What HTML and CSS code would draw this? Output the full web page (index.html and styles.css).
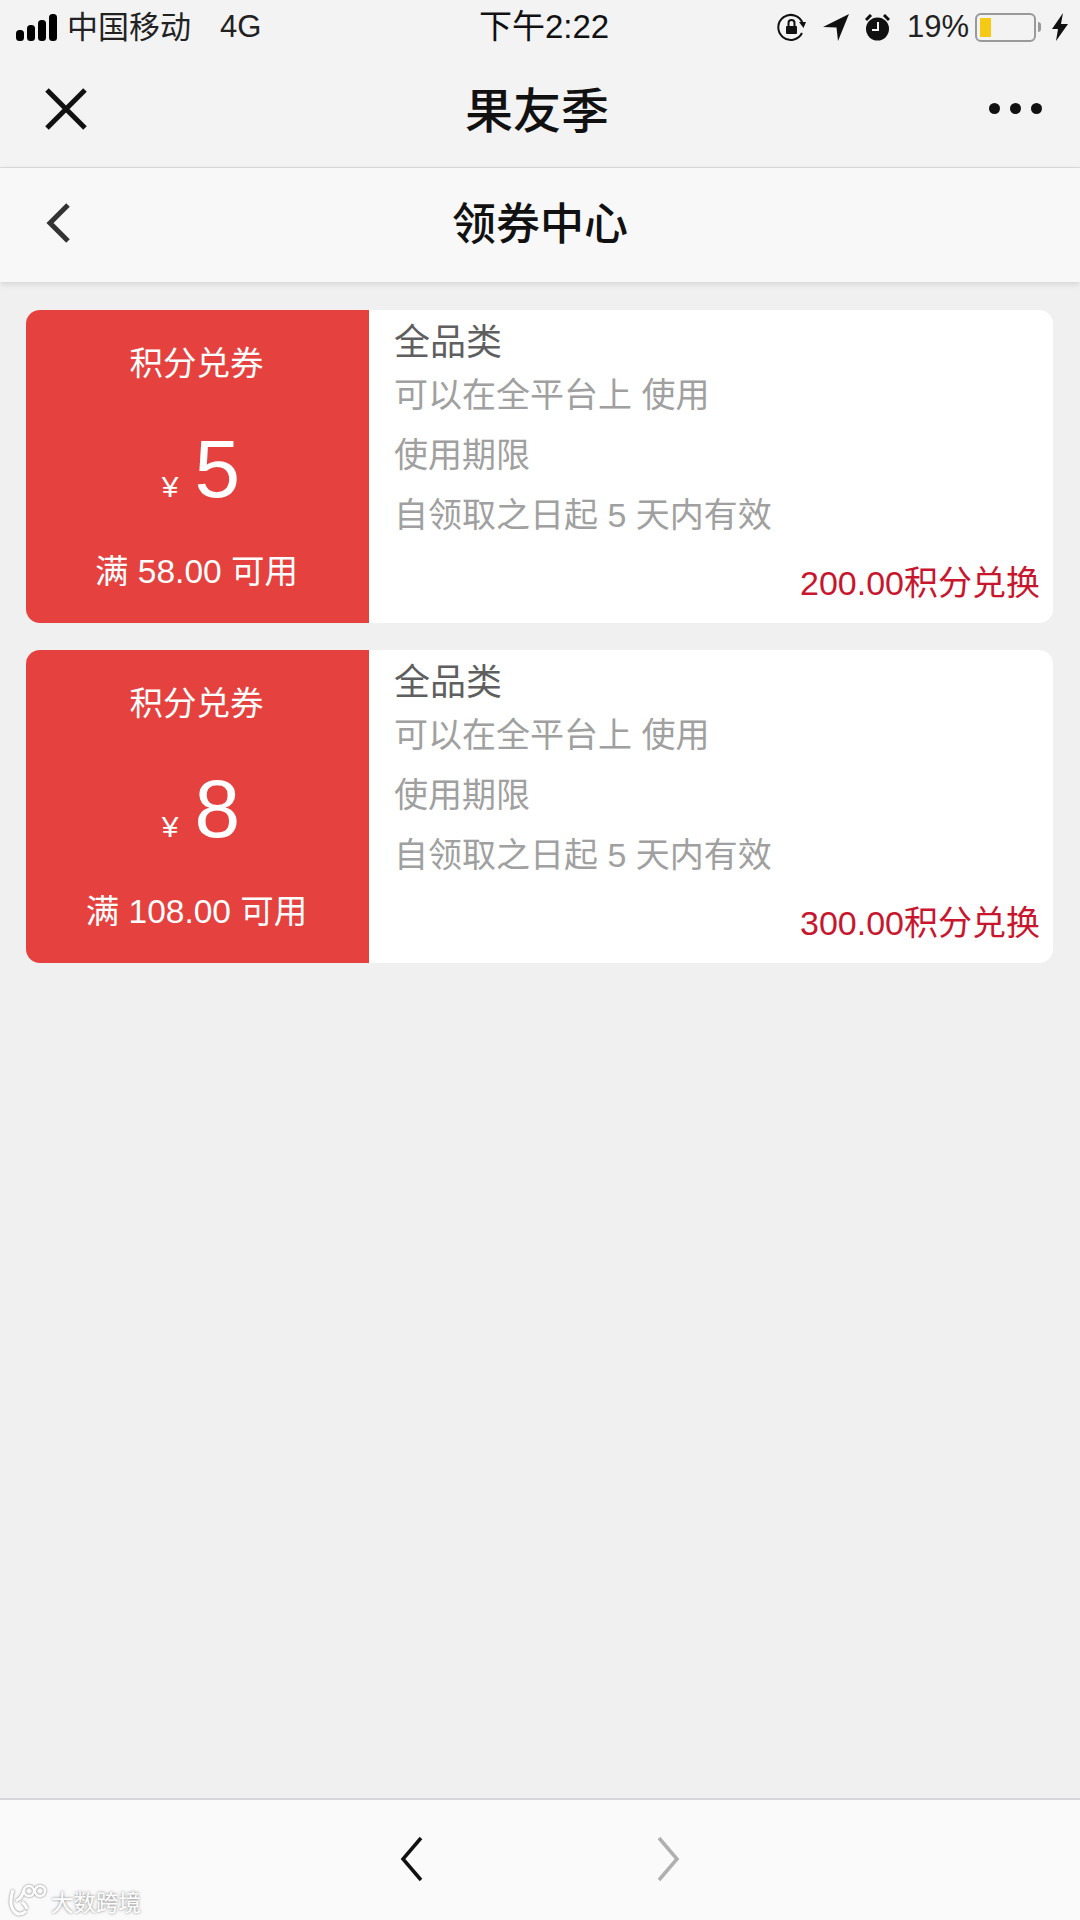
FILE: index.html
```html
<!DOCTYPE html>
<html lang="zh-CN">
<head>
    <meta charset="UTF-8">
    <meta name="viewport" content="width=device-width, initial-scale=1.0">
    <title>领券中心</title>
    <link rel="stylesheet" href="styles.css">
</head>
<body>
    <div class="page">
        <header class="top">
            <div class="status">
                <div class="status-left">
                    <svg class="signal" width="42" height="27" viewBox="0 0 42 27">
                        <rect x="0" y="16" width="8" height="11" rx="3.5"/>
                        <rect x="11" y="11" width="8" height="16" rx="3.5"/>
                        <rect x="22" y="6" width="8" height="21" rx="3.5"/>
                        <rect x="33" y="0" width="8" height="27" rx="3.5"/>
                    </svg>
                    <span class="carrier">中国移动</span>
                    <span class="network">4G</span>
                </div>
                <div class="status-time">下午2:22</div>
                <div class="status-right">
                    <svg class="rotation" width="30" height="28" viewBox="0 0 30 28">
                        <path d="M25 20a12.5 12.5 0 1 1 .5-10" fill="none" stroke="#111" stroke-width="2"/>
                        <path d="M22 9l7 0-2.5 6z" fill="#111"/>
                        <rect x="9" y="13" width="11" height="8" rx="1" fill="#111"/>
                        <path d="M11.5 13v-3a3 3 0 0 1 6 0v3" fill="none" stroke="#111" stroke-width="2"/>
                    </svg>
                    <svg class="location" width="26" height="27" viewBox="0 0 26 27">
                        <path d="M26 0L15 27 13.500 13.500 0 13z" fill="#111"/>
                    </svg>
                    <svg class="alarm" width="25" height="27" viewBox="0 0 25 27">
                        <circle cx="12.500" cy="15" r="11.500" fill="#111"/>
                        <path d="M13 8v8H7" fill="none" stroke="#f3f3f3" stroke-width="2"/>
                        <path d="M1 6l5-5M24 6l-5-5" stroke="#111" stroke-width="3" fill="none"/>
                    </svg>
                    <span class="percent">19%</span>
                    <div class="battery">
                        <div class="battery-level"></div>
                    </div>
                    <div class="battery-nub"></div>
                    <svg class="bolt" width="16" height="28" viewBox="0 0 16 28">
                        <path d="M11 0L0 16h6L4 28 16 11H9z" fill="#111"/>
                    </svg>
                </div>
            </div>
            <div class="wx-nav">
                <svg class="wx-close" width="42" height="42" viewBox="0 0 42 42">
                    <path d="M2 2l38 38M40 2L2 40" stroke="#111" stroke-width="5" fill="none"/>
                </svg>
                <div class="wx-title">果友季</div>
                <div class="wx-more"><i></i><i></i><i></i></div>
            </div>
        </header>

        <nav class="sub-nav">
            <svg class="sub-back" width="26" height="42" viewBox="0 0 26 42">
                <path d="M23 3L5 21l18 18" stroke="#333" stroke-width="5" fill="none"/>
            </svg>
            <div class="sub-title">领券中心</div>
        </nav>

        <main class="coupons">
            <div class="coupon">
                <div class="coupon-left">
                    <div class="coupon-tag">积分兑券</div>
                    <div class="coupon-amount"><span class="yen">¥</span><span class="num">5</span></div>
                    <div class="coupon-limit">满 58.00 可用</div>
                </div>
                <div class="coupon-right">
                    <div class="coupon-name">全品类</div>
                    <div class="coupon-line">可以在全平台上 使用</div>
                    <div class="coupon-line">使用期限</div>
                    <div class="coupon-line">自领取之日起 5 天内有效</div>
                    <div class="coupon-price">200.00积分兑换</div>
                </div>
            </div>
            <div class="coupon">
                <div class="coupon-left">
                    <div class="coupon-tag">积分兑券</div>
                    <div class="coupon-amount"><span class="yen">¥</span><span class="num">8</span></div>
                    <div class="coupon-limit">满 108.00 可用</div>
                </div>
                <div class="coupon-right">
                    <div class="coupon-name">全品类</div>
                    <div class="coupon-line">可以在全平台上 使用</div>
                    <div class="coupon-line">使用期限</div>
                    <div class="coupon-line">自领取之日起 5 天内有效</div>
                    <div class="coupon-price">300.00积分兑换</div>
                </div>
            </div>
        </main>

        <footer class="bottom">
            <svg width="26" height="46" viewBox="0 0 26 46">
                <path d="M23 2L5 23l18 21" stroke="#111" stroke-width="3.500" fill="none"/>
            </svg>
            <svg width="26" height="46" viewBox="0 0 26 46">
                <path d="M3 2l18 21L3 44" stroke="#b0b0b0" stroke-width="3.500" fill="none"/>
            </svg>
        </footer>

        <div class="watermark">
            <svg width="40" height="34" viewBox="0 0 40 34">
                <path d="M5 6c-3 9-3 16 1 21 3 4 8 4 12 0M8 17c4-2 7-6 8-11M14 18c3 2 4 4 5 7" fill="none" stroke="#fff" stroke-width="3"/>
                <circle cx="21" cy="7" r="5" fill="none" stroke="#fff" stroke-width="2.500"/>
                <circle cx="32" cy="7" r="5" fill="none" stroke="#fff" stroke-width="2.500"/>
            </svg>
            <span>大数跨境</span>
        </div>
    </div>
</body>
</html>
```

FILE: styles.css
```css
* {
    box-sizing: border-box;
}
body {
    margin: 0;
    font-family: "Liberation Sans", "Noto Sans CJK SC", sans-serif;
    background-color: #f1f0f0;
}
.page {
    position: relative;
    display: flex;
    flex-direction: column;
    width: 1080px;
    height: 1920px;
    overflow: hidden;
}

/* status bar + wechat bar */
.top {
    height: 168px;
    background-color: #f3f3f3;
    border-bottom: 1px solid #dcdcdc;
}
.status {
    position: relative;
    display: flex;
    justify-content: space-between;
    align-items: center;
    height: 54px;
    padding: 0 12px 0 16px;
    font-size: 31px;
    color: #222;
}
.status-left {
    display: flex;
    align-items: center;
}
.carrier {
    margin-left: 9px;
    padding-bottom: 5px;
}
.network {
    margin-left: 29px;
}
.status-time {
    position: absolute;
    left: 479px;
    padding-bottom: 6px;
    font-size: 33px;
    color: #111;
}
.status-right {
    display: flex;
    align-items: center;
}
.rotation {
    margin-right: 16px;
}
.location {
    margin-right: 16px;
}
.alarm {
    margin-right: 17px;
}
.percent {
    margin-right: 6px;
}
.battery {
    width: 61px;
    height: 29px;
    padding: 3px;
    border: 2px solid #999;
    border-radius: 6px;
}
.battery-level {
    width: 11px;
    height: 100%;
    background-color: #f6c915;
}
.battery-nub {
    width: 3px;
    height: 10px;
    margin: 0 11px 0 2px;
    background-color: #999;
    border-radius: 0 3px 3px 0;
}
.wx-nav {
    position: relative;
    display: flex;
    justify-content: space-between;
    align-items: center;
    height: 113px;
    padding: 0 38px 4px 45px;
}
.wx-title {
    position: absolute;
    left: 0;
    right: 6px;
    padding-bottom: 4px;
    text-align: center;
    font-size: 48px;
    font-weight: 500;
    color: #111;
}
.wx-more {
    display: flex;
    gap: 10px;
}
.wx-more i {
    display: block;
    width: 11px;
    height: 11px;
    background-color: #111;
    border-radius: 50%;
}

.sub-nav {
    position: relative;
    display: flex;
    align-items: center;
    height: 114px;
    padding: 0 0 4px 45px;
    background-color: #f8f8f8;
    box-shadow: 0 2px 6px rgba(0, 0, 0, 0.12);
}
.sub-title {
    position: absolute;
    left: 0;
    right: 0;
    padding-bottom: 4px;
    text-align: center;
    font-size: 44px;
    font-weight: 500;
    color: #111;
}

/* coupons */
.coupons {
    display: flex;
    flex-direction: column;
    gap: 27px;
    padding: 28px 27px 0 26px;
}
.coupon {
    display: flex;
    height: 313px;
    background-color: #fff;
    border-radius: 14px;
    overflow: hidden;
}
.coupon-left {
    width: 343px;
    padding: 34px 2px 0 0;
    background-color: #e5413e;
    color: #fff;
    text-align: center;
}
.coupon-tag {
    font-size: 33.500px;
    line-height: 40px;
}
.coupon-amount {
    display: flex;
    justify-content: center;
    align-items: baseline;
    height: 90px;
    margin: 40px 0 0 9px;
    line-height: 90px;
}
.yen {
    margin-right: 16px;
    font-size: 30px;
}
.num {
    font-size: 82px;
}
.coupon-limit {
    margin-top: 38px;
    font-size: 33.500px;
    line-height: 40px;
}
.coupon-right {
    display: flex;
    flex-direction: column;
    flex: 1;
    padding: 11px 13px 20px 25px;
}
.coupon-name {
    font-size: 36px;
    line-height: 44px;
    color: #5f5f5f;
}
.coupon-line {
    font-size: 34px;
    line-height: 60px;
    color: #a0a0a0;
}
.coupon-price {
    margin-top: auto;
    font-size: 34px;
    line-height: 40px;
    text-align: right;
    color: #c8162e;
}

/* bottom bar */
.bottom {
    display: flex;
    justify-content: center;
    gap: 232px;
    height: 122px;
    margin-top: auto;
    padding-top: 36px;
    background-color: #fbfafb;
    border-top: 2px solid #d6d5d7;
}
.watermark {
    position: absolute;
    left: 8px;
    bottom: 2px;
    display: flex;
    align-items: center;
    gap: 3px;
    font-size: 22.500px;
    color: #fff;
    text-shadow: 0 0 3px #777;
}
.watermark svg {
    filter: drop-shadow(0 0 1px #777);
}
```
